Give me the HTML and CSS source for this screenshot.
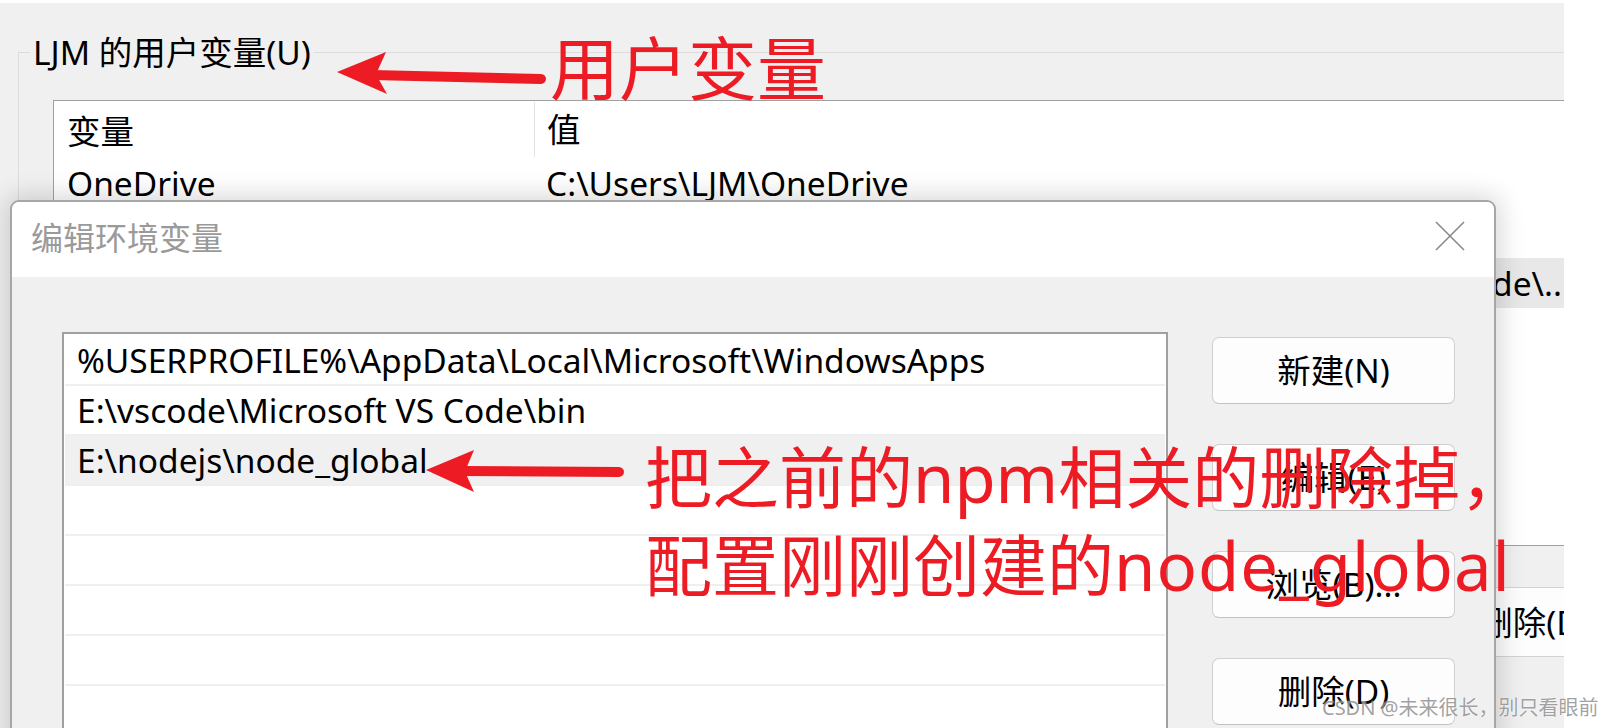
FILE: index.html
```html
<!DOCTYPE html>
<html lang="zh-CN">
<head>
<meta charset="utf-8">
<title>编辑环境变量</title>
<link rel="stylesheet" href="styles.css">
</head>
<body>
<div class="shot">
  <div class="bgwin">
    <div class="group">
      <div class="legend">LJM 的用户变量(U)</div>
      <div class="listview">
        <div class="lv-head">
          <div class="c1">变量</div>
          <div class="c2">值</div>
        </div>
        <div class="lv-row">
          <div class="c1">OneDrive</div>
          <div class="c2">C:\Users\LJM\OneDrive</div>
        </div>
        <div class="lv-row"></div>
        <div class="lv-row sel">
          <div class="c1"></div>
          <div class="c2 trunc"><span>E:\nodejs\node\...</span></div>
        </div>
        <div class="lv-row"></div>
        <div class="lv-row"></div>
      </div>
      <div class="bg-buttons">
        <div class="bg-btn"></div>
        <div class="bg-btn"></div>
        <div class="bg-btn">删除(D)</div>
      </div>
    </div>
  </div>

  <div class="dialog">
    <div class="titlebar">
      <span class="title">编辑环境变量</span>
      <svg class="close" width="30" height="30" viewBox="0 0 30 30">
        <path d="M1 1 L29 29 M29 1 L1 29" stroke="#8a8a8a" stroke-width="1.6" fill="none"/>
      </svg>
    </div>
    <div class="dbody">
      <div class="listbox">
        <div class="lb-row">%USERPROFILE%\AppData\Local\Microsoft\WindowsApps</div>
        <div class="lb-row">E:\vscode\Microsoft VS Code\bin</div>
        <div class="lb-row hl">E:\nodejs\node_global</div>
        <div class="lb-row"></div>
        <div class="lb-row"></div>
        <div class="lb-row"></div>
        <div class="lb-row"></div>
        <div class="lb-row"></div>
      </div>
      <div class="btncol">
        <div class="btn">新建(N)</div>
        <div class="btn">编辑(E)</div>
        <div class="btn">浏览(B)...</div>
        <div class="btn">删除(D)</div>
      </div>
    </div>
  </div>

  <svg class="marks" width="1564" height="728" viewBox="0 0 1564 728">
    <g fill="#ed1c24" stroke="none">
      <path d="M337 72 L386 52 L377 72 L378 78 L387 94 Z"/>
      <path d="M426 470 L474 450 L466 469 L466 474 L474 492 Z"/>
    </g>
    <g stroke="#ed1c24" stroke-width="10" stroke-linecap="round" fill="none">
      <path d="M372 75 L541 79"/>
      <path d="M462 471 L619 472"/>
    </g>
  </svg>

  <div class="note note-user">用户变量</div>
  <div class="note note-path">把之前的npm相关的删除掉，<br>配置刚刚创建的<span class="latin">node_global</span></div>
</div>
<div class="watermark">CSDN @未来很长，别只看眼前</div>
</body>
</html>
```

FILE: styles.css
```css
html, body {
  margin: 0;
  padding: 0;
  background: #ffffff;
}

body {
  width: 1609px;
  height: 728px;
  position: relative;
  overflow: hidden;
  font-family: "Noto Sans", "Noto Sans CJK SC", sans-serif;
  color: #000;
}

.shot {
  position: relative;
  width: 1564px;
  height: 725px;
  margin-top: 3px;
  background: #f0f0f0;
  overflow: hidden;
}

/* ---------- background window ---------- */
.bgwin {
  padding-left: 18px;
  padding-top: 49px;
  font-size: 33.5px;
}

.group {
  width: 1700px;
  height: 800px;
  border: 1px solid #dcdcdc;
}

.legend {
  width: fit-content;
  margin-top: -19px;
  margin-left: 11px;
  padding: 0 3px;
  height: 36px;
  line-height: 36px;
  background: #f0f0f0;
}

.listview {
  margin-top: 30px;
  margin-left: 34px;
  width: 1700px;
  height: 444px;
  background: #fff;
  border-top: 1px solid #a0a0a0;
  border-left: 1px solid #a0a0a0;
  border-bottom: 1px solid #a0a0a0;
}

.lv-head,
.lv-row {
  display: flex;
  align-items: center;
  white-space: nowrap;
}

.lv-head {
  height: 57px;
}

.lv-row {
  height: 50px;
}

.c1 {
  width: 480px;
  padding-left: 13px;
  box-sizing: border-box;
  flex: none;
}

.c2 {
  padding-left: 12px;
  flex: none;
}

.lv-head .c2 {
  border-left: 1px solid #e3e3e3;
  height: 55px;
  line-height: 55px;
}

.lv-row.sel {
  background: #e8e8e8;
  width: 1540px;
}

.trunc {
  width: 1037px;
  box-sizing: border-box;
  overflow: hidden;
  display: flex;
  justify-content: flex-end;
}

.trunc span {
  flex: none;
}

.bg-buttons {
  display: flex;
  gap: 22px;
  margin-top: 41px;
  padding-left: 872px;
}

.bg-btn {
  width: 240px;
  height: 70px;
  line-height: 68px;
  text-align: center;
  background: #fdfdfd;
  border: 1px solid #d3d3d3;
  border-radius: 6px;
  box-sizing: border-box;
  flex: none;
  white-space: nowrap;
}

/* ---------- dialog ---------- */
.dialog {
  position: absolute;
  left: 10px;
  top: 197px;
  width: 1486px;
  height: 620px;
  box-sizing: border-box;
  border: 2px solid #a6a6a6;
  border-radius: 9px 9px 0 0;
  background: #f0f0f0;
  box-shadow: 0 0 26px 4px rgba(0, 0, 0, 0.16);
  overflow: hidden;
  font-size: 33.5px;
}

.titlebar {
  height: 75px;
  box-sizing: border-box;
  background: #fff;
  display: flex;
  align-items: center;
  justify-content: space-between;
  padding: 0 29px 7px 19px;
}

.title {
  color: #9a9a9a;
  font-size: 32px;
}

.close {
  display: block;
}

.dbody {
  display: flex;
  align-items: flex-start;
  padding: 55px 0 0 50px;
}

.listbox {
  width: 1106px;
  height: 500px;
  box-sizing: border-box;
  border: 2px solid #a0a0a0;
  border-bottom: none;
  background: #fff;
  padding: 2px 1px 0;
  flex: none;
}

.lb-row {
  height: 50px;
  box-sizing: border-box;
  border-bottom: 2px solid #efefef;
  padding-left: 12px;
  line-height: 48px;
  white-space: nowrap;
}

.lb-row.hl {
  background: #f0f0f0;
}

.btncol {
  margin-left: 44px;
  margin-top: 5px;
  display: flex;
  flex-direction: column;
  gap: 40px;
}

.btn {
  width: 243px;
  height: 67px;
  box-sizing: border-box;
  line-height: 65px;
  text-align: center;
  background: #fdfdfd;
  border: 1px solid #d0d0d0;
  border-bottom-color: #c2c2c2;
  border-radius: 7px;
  white-space: nowrap;
}

/* ---------- annotations ---------- */
.marks {
  position: absolute;
  left: 0;
  top: -3px;
  pointer-events: none;
}

.note {
  position: absolute;
  color: #ed1c24;
  font-family: "Noto Sans", "Noto Sans CJK SC", sans-serif;
  white-space: nowrap;
  pointer-events: none;
}

.note-user {
  left: 550px;
  top: 19px;
  font-size: 69px;
  line-height: 92px;
}

.note-path {
  left: 645px;
  top: 430px;
  font-size: 67px;
  line-height: 88px;
}

.latin {
  letter-spacing: 1px;
}

.watermark {
  position: absolute;
  left: 1322px;
  top: 694px;
  font-size: 20px;
  line-height: 28px;
  color: rgba(120, 120, 120, 0.7);
  text-shadow: 0 0 2px rgba(255, 255, 255, 0.9);
  white-space: nowrap;
}
```
